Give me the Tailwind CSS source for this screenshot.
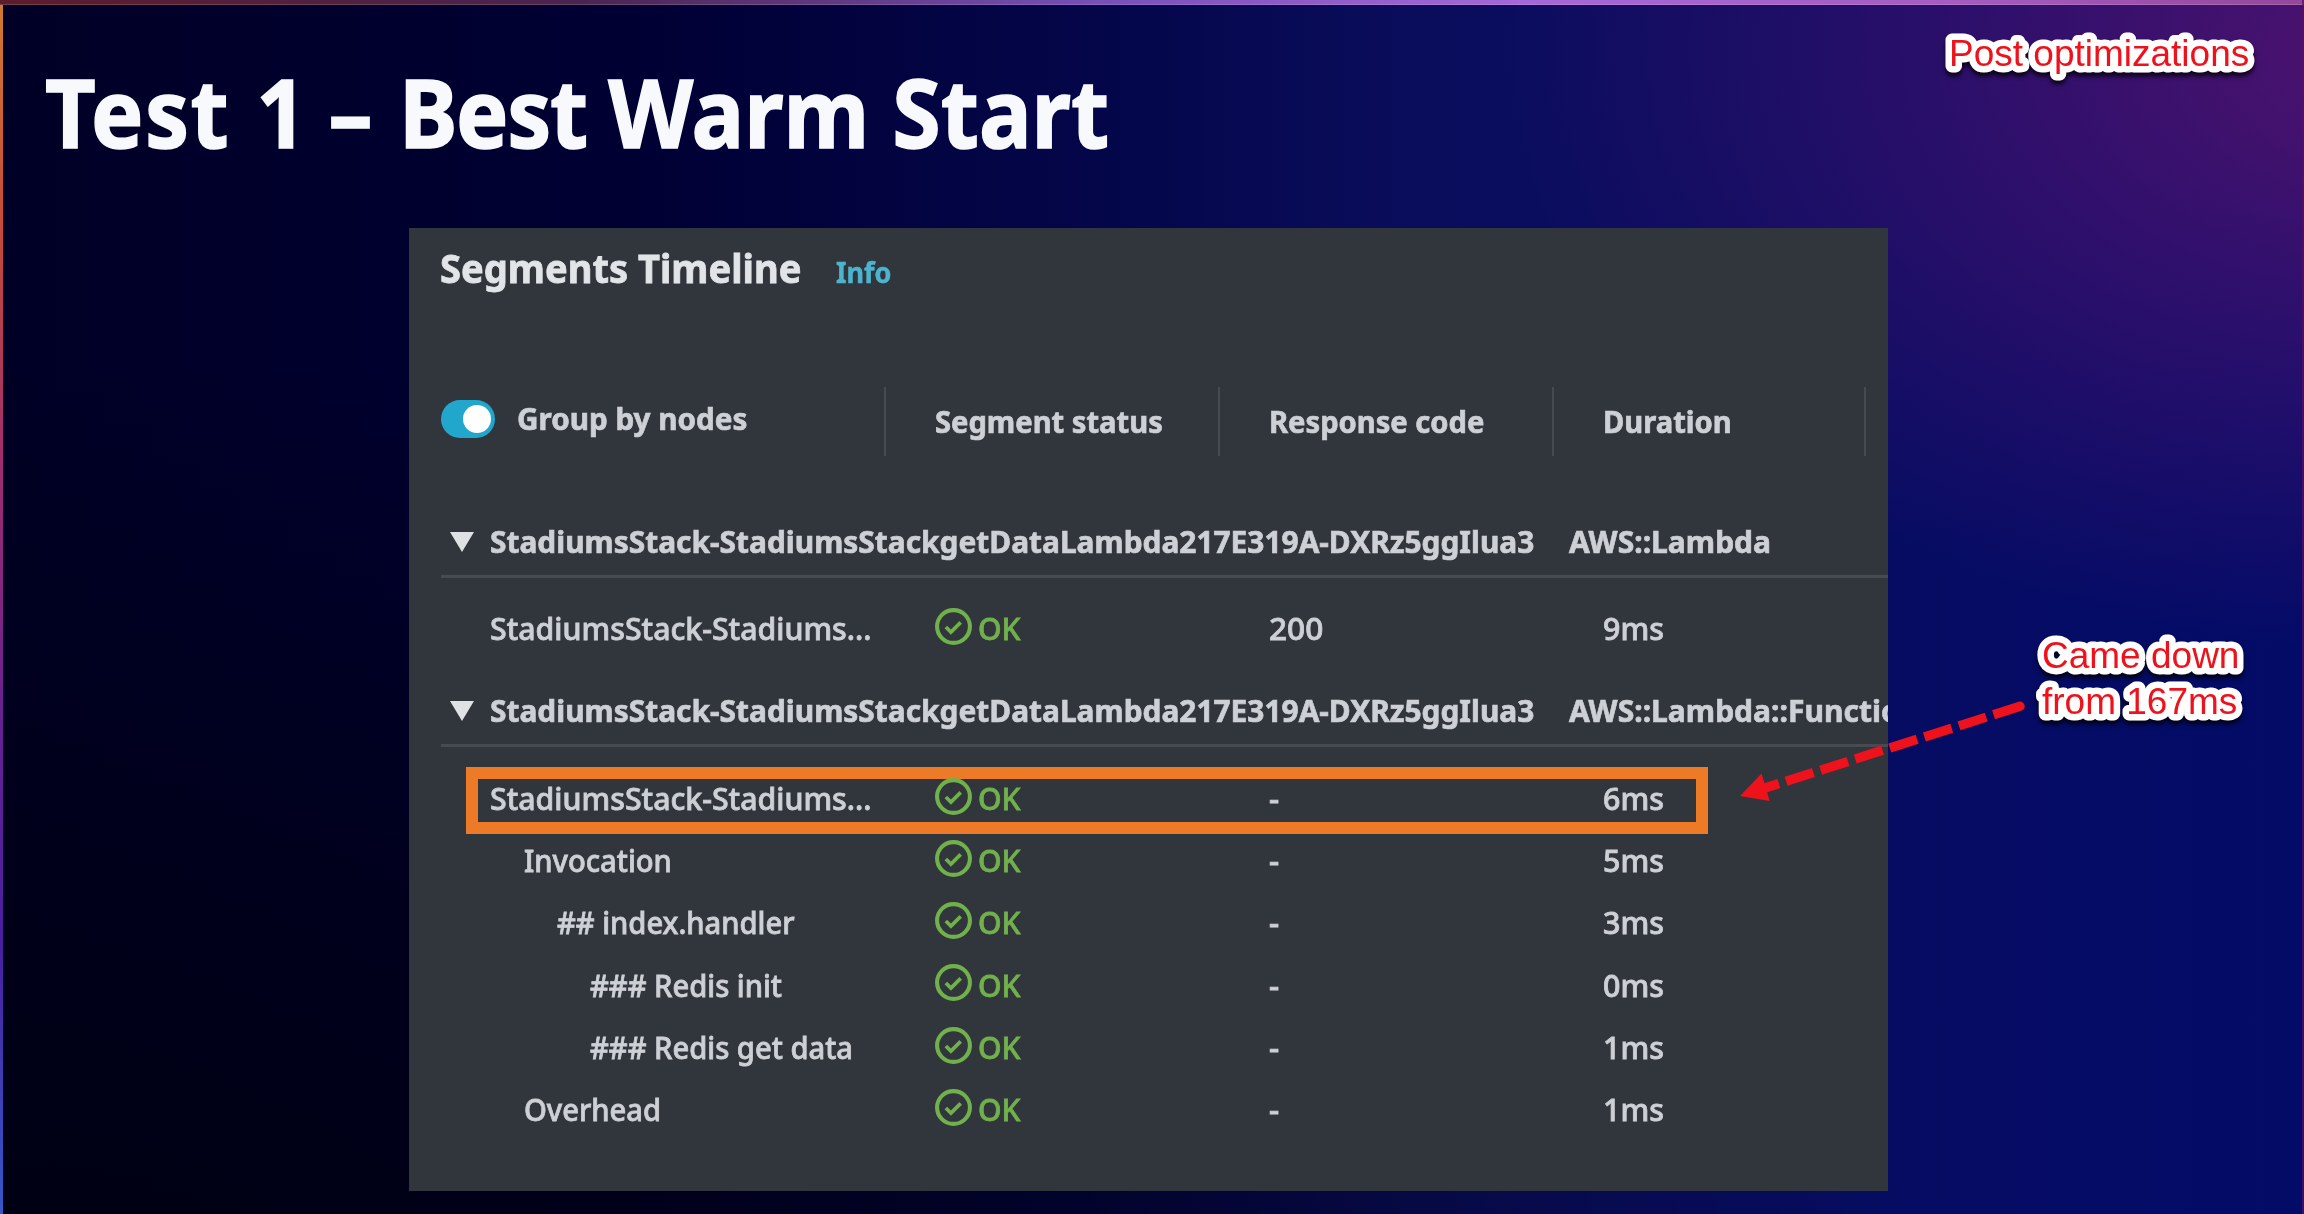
<!DOCTYPE html>
<html lang="en">
<head>
<meta charset="utf-8">
<title>Test 1 – Best Warm Start</title>
<script src="https://cdn.jsdelivr.net/npm/@tailwindcss/browser@4"></script>
</head>
<body class="h-[1214px] w-[2304px] overflow-hidden bg-[#000024] font-['Noto_Sans',sans-serif]">
<svg class="hidden"><symbol id="ok" viewBox="0 0 38 38"><circle cx="19" cy="19" r="16" fill="none" stroke="currentColor" stroke-width="4"/><path d="M11.5 19.5l5 5 9.5-9.5" fill="none" stroke="currentColor" stroke-width="3.6"/></symbol></svg>
<div class="relative h-full w-full bg-[radial-gradient(900px_600px_at_104%_4%,rgba(90,20,112,0.88),rgba(74,18,112,0.6)_45%,rgba(50,16,112,0)_100%),radial-gradient(1800px_950px_at_5%_108%,rgba(0,0,16,0.9),rgba(0,0,20,0.6)_50%,rgba(0,0,16,0)_100%),linear-gradient(90deg,#000026_0%,#000034_28%,#04064a_48%,#0a0d5c_62%,#060c62_82%,#030b68_100%)]">
  <div class="absolute inset-y-0 left-0 w-[3px] bg-[linear-gradient(180deg,#d07a30_0%,#c84a38_18%,#a02c70_38%,#6a2090_58%,#4a1ea0_78%,#3458c8_100%)]"></div>
  <div class="absolute inset-x-0 top-0 h-[5px] border-b border-white/15 bg-[linear-gradient(90deg,#5c1c2c_0%,#4a2450_25%,#7850b8_48%,#a468d8_66%,#a45cc0_85%,#94489c_100%)]"></div>
  <div class="absolute inset-y-0 right-0 w-0.5 bg-[#5a0e62]/70"></div>

  <h1 class="flex h-[228px] items-center pb-[5px] pl-[45px] text-[95px] font-bold text-[#f8f9fc] [-webkit-text-stroke:1.5px_#f8f9fc]"><span class="inline-block origin-left scale-x-[0.926] whitespace-nowrap"><span class="tracking-[1.5px]">Test </span><span class="ml-0.5">1 </span><span class="-ml-px">– </span><span class="ml-1 tracking-[-1.5px]">Best </span>Warm Start</span></h1>

  <main class="ml-[409px] h-[963px] w-[1479px] overflow-hidden bg-[#31353c] pl-[32px] text-[31px] text-[#cdd0d4]">
    <header class="flex h-[80px] items-baseline pt-[14px] leading-[52px]">
      <h2 class="w-[395px] text-[40px] font-bold text-[#e2e5e8] [-webkit-text-stroke:0.8px_#e2e5e8]"><span class="-ml-px inline-block origin-left scale-x-[0.952] whitespace-nowrap">Segments Timeline</span></h2>
      <a class="inline-block origin-left scale-x-[0.93] text-[29px] font-bold text-[#4cb4cf] [-webkit-text-stroke:0.5px_#4cb4cf]">Info</a>
    </header>
    <div class="mt-[79px] grid h-[69px] grid-cols-[445px_334px_334px_312px] font-bold [-webkit-text-stroke:0.7px_#cdd0d4]">
      <div class="flex items-center border-r-2 border-[#454951] pb-[6px]">
        <span class="flex h-[38px] w-[54px] items-center justify-end rounded-full bg-[#22a7cc] pr-1"><span class="size-7 rounded-full bg-white"></span></span>
        <span class="ml-[22px] inline-block origin-left scale-x-[0.957] whitespace-nowrap">Group by nodes</span>
      </div>
      <div class="flex items-center border-r-2 border-[#454951] pl-[49px]"><span class="inline-block origin-left scale-x-[0.94] whitespace-nowrap">Segment status</span></div>
      <div class="flex items-center border-r-2 border-[#454951] pl-[49px]"><span class="inline-block origin-left scale-x-[0.94] whitespace-nowrap">Response code</span></div>
      <div class="flex items-center border-r-2 border-[#454951] pl-[49px]"><span class="inline-block origin-left scale-x-[0.94] whitespace-nowrap">Duration</span></div>
    </div>

    <div class="mt-[48px] flex h-[74px] items-center border-b-[3px] border-[#474a51] pt-[3px] font-bold whitespace-nowrap [-webkit-text-stroke:0.7px_#cdd0d4]">
      <svg class="mt-0.5 ml-[9px] h-5 w-6 shrink-0 text-[#dfe2e5]" viewBox="0 0 24 20"><path d="M0 0h24L12 20z" fill="currentColor" stroke="none"/></svg>
      <div class="ml-[16px] w-[1079px] shrink-0"><span class="inline-block origin-left scale-x-[0.964]">StadiumsStack-StadiumsStackgetDataLambda217E319A-DXRz5ggIlua3</span></div>
      <span class="inline-block origin-left scale-x-[0.969]">AWS::Lambda</span>
    </div>
    <div id="first" class="pt-[19px] pb-[14px] font-medium [-webkit-text-stroke:0.8px_currentColor]"></div>
    <div class="flex h-[74px] items-center border-b-[3px] border-[#474a51] pt-[3px] font-bold whitespace-nowrap [-webkit-text-stroke:0.7px_#cdd0d4]">
      <svg class="mt-0.5 ml-[9px] h-5 w-6 shrink-0 text-[#dfe2e5]" viewBox="0 0 24 20"><path d="M0 0h24L12 20z" fill="currentColor" stroke="none"/></svg>
      <div class="ml-[16px] w-[1079px] shrink-0"><span class="inline-block origin-left scale-x-[0.964]">StadiumsStack-StadiumsStackgetDataLambda217E319A-DXRz5ggIlua3</span></div>
      <span class="inline-block origin-left scale-x-[0.969]">AWS::Lambda::Function</span>
    </div>
    <div id="second" class="relative pt-[20px] font-medium [-webkit-text-stroke:0.8px_currentColor]">
      <div class="absolute top-5 left-[25px] h-[67px] w-[1242px] border-[12.5px] border-[#ec7a26]"></div>
    </div>
  </main>

  <svg class="absolute inset-0 h-full w-full font-['Liberation_Sans',Arial,sans-serif]" viewBox="0 0 2304 1214">
    <g class="fill-[#ee121c] stroke-white text-[37px] [filter:drop-shadow(0_4px_2px_rgba(0,0,0,0.75))] [paint-order:stroke]" stroke-width="13" stroke-linejoin="round">
      <text x="1949" y="66">Post optimizations</text>
      <text x="2042" y="667.5">Came down</text>
      <text x="2042" y="713.5">from 167ms</text>
    </g>
    <g class="fill-[#ee121c] stroke-[#ee121c]">
      <circle cx="2020" cy="706.3" r="4.7" stroke="none"/>
      <path d="M2020 706.3L1765 788" fill="none" stroke-width="9.4" stroke-dasharray="28.7 7.6" stroke-dashoffset="0.9"/>
      <path d="M1740 796L1761.5 773.5L1766 787.5L1769.5 801z" stroke="none"/>
    </g>
  </svg>
</div>
<script>
  const row = (indent, name, code, ms) => `
    <div class="relative grid h-[62.2px] grid-cols-[445px_334px_334px_312px] items-center whitespace-nowrap">
      <div style="padding-left:${indent}px"><span class="inline-block origin-left scale-x-[0.94]">${name}</span></div>
      <div class="flex items-center pl-[48px] text-[#71b14b]"><svg class="mb-1 h-[39px] w-[39px]"><use href="#ok"/></svg><span class="ml-[5px] inline-block origin-left scale-x-[0.97]">OK</span></div>
      <div class="pl-[49px]"><span class="inline-block origin-left scale-x-[1.02]">${code}</span></div>
      <div class="pl-[49px]"><span class="inline-block origin-left scale-x-[0.98]">${ms}</span></div>
    </div>`;
  const stack = '<span class="inline-block origin-left scale-x-[1.039]">StadiumsStack-Stadiums...</span>';
  document.getElementById('first').innerHTML = row(49, stack, '200', '9ms');
  document.getElementById('second').insertAdjacentHTML('beforeend', [
    [49, stack, '-', '6ms'], [83, 'Invocation', '-', '5ms'], [116, '## index.handler', '-', '3ms'],
    [149, '### Redis init', '-', '0ms'], [149, '### Redis get data', '-', '1ms'], [83, 'Overhead', '-', '1ms']
  ].map(r => row(...r)).join(''));
</script>
</body>
</html>
